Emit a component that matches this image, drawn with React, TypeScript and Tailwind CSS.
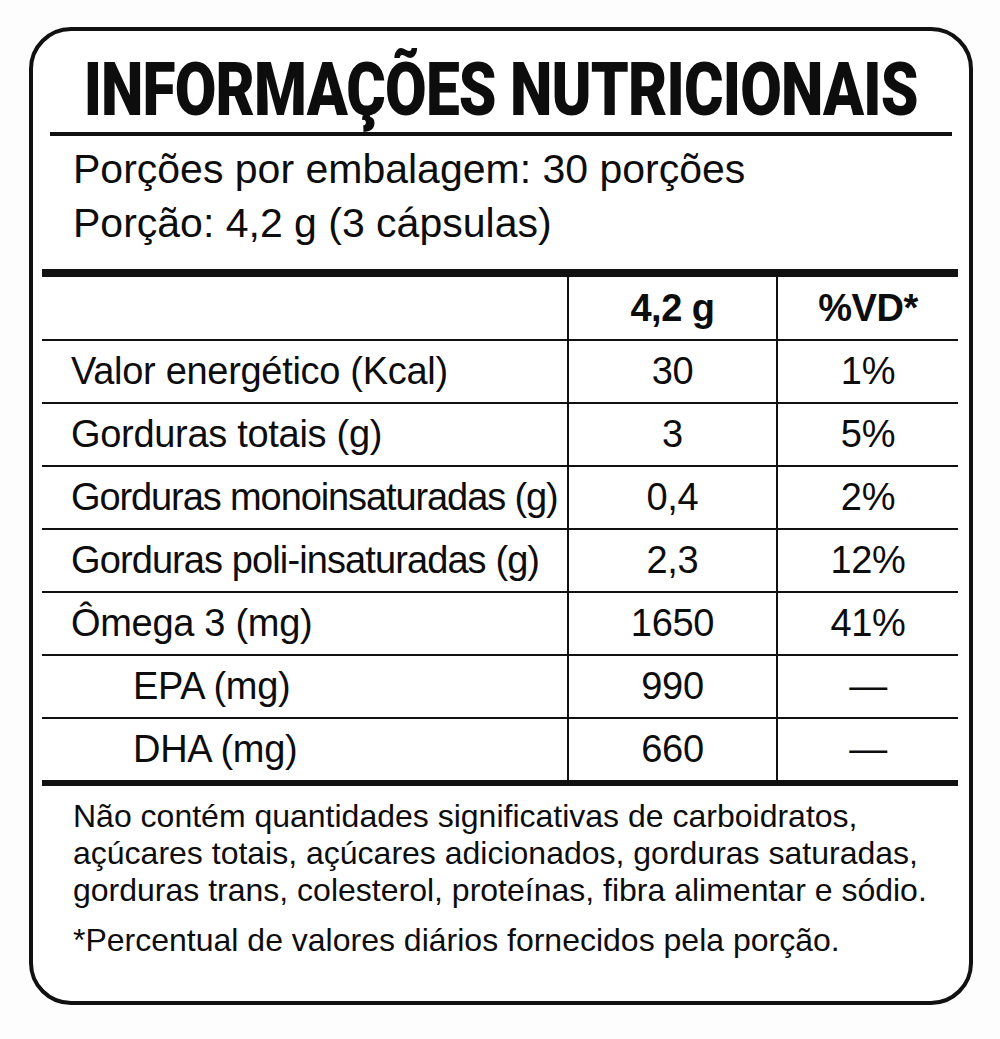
import React from 'react';

const rows = [
  { label: 'Valor energético (Kcal)', amount: '30', vd: '1%', indent: false, tight: '' },
  { label: 'Gorduras totais (g)', amount: '3', vd: '5%', indent: false, tight: '' },
  { label: 'Gorduras monoinsaturadas (g)', amount: '0,4', vd: '2%', indent: false, tight: 'tracking-[-1.1px]' },
  { label: 'Gorduras poli-insaturadas (g)', amount: '2,3', vd: '12%', indent: false, tight: 'tracking-[-0.9px]' },
  { label: 'Ômega 3 (mg)', amount: '1650', vd: '41%', indent: false, tight: '' },
  { label: 'EPA (mg)', amount: '990', vd: '—', indent: true, tight: '' },
  { label: 'DHA (mg)', amount: '660', vd: '—', indent: true, tight: '' },
];

export default function App() {
  return (
    <div className="w-[1000px] h-[1039px] bg-[#fdfdfd] pt-[27px] pl-[29px] text-[#0d0d0d] font-['Liberation_Sans',Arial,sans-serif]">
      <div className="w-[944px] h-[978px] border-4 border-[#111] rounded-[42px] bg-white">
        {/* Title */}
        <div className="pt-[22px] h-[96px] flex justify-center">
          <h1 className="h-[74px] text-[74px] leading-none font-black font-['Roboto',sans-serif] whitespace-nowrap scale-x-[0.815] tracking-[-1px]">
            INFORMAÇÕES NUTRICIONAIS
          </h1>
        </div>
        <div className="mt-[5px] mx-[17px] h-[4px] bg-[#111]" />

        {/* Servings */}
        <div className="mt-[6px] pl-[40px] text-[41px] leading-[54px]">
          <p>Porções por embalagem: 30 porções</p>
          <p>Porção: 4,2 g (3 cápsulas)</p>
        </div>

        {/* Table */}
        <div className="mt-[19px] ml-[9px] mr-[11px]">
          <div className="h-[8px] bg-[#111]" />
          <div className="grid grid-cols-[525px_209px_1fr] h-[62px] text-[38px] font-bold tracking-[-0.5px]">
            <div />
            <div className="border-l-2 border-[#111] flex items-center justify-center">4,2 g</div>
            <div className="border-l-2 border-[#111] flex items-center justify-center">%VD*</div>
          </div>
          {rows.map((r) => (
            <div
              key={r.label}
              className="grid grid-cols-[525px_209px_1fr] h-[63px] border-t-2 border-[#111] text-[38px] tracking-[-0.3px]"
            >
              <div className={`flex items-center whitespace-nowrap ${r.indent ? 'pl-[91px]' : 'pl-[29px]'} ${r.tight}`}>
                {r.label}
              </div>
              <div className="border-l-2 border-[#111] flex items-center justify-center">{r.amount}</div>
              <div className="border-l-2 border-[#111] flex items-center justify-center">{r.vd}</div>
            </div>
          ))}
          <div className="h-[6px] bg-[#111]" />
        </div>

        {/* Footer */}
        <div className="mt-[12px] pl-[40px] text-[32px] leading-[37px]">
          <p>
            Não contém quantidades significativas de carboidratos,
            <br />
            açúcares totais, açúcares adicionados, gorduras saturadas,
            <br />
            gorduras trans, colesterol, proteínas, fibra alimentar e sódio.
          </p>
          <p className="mt-[13px]">*Percentual de valores diários fornecidos pela porção.</p>
        </div>
      </div>
    </div>
  );
}
